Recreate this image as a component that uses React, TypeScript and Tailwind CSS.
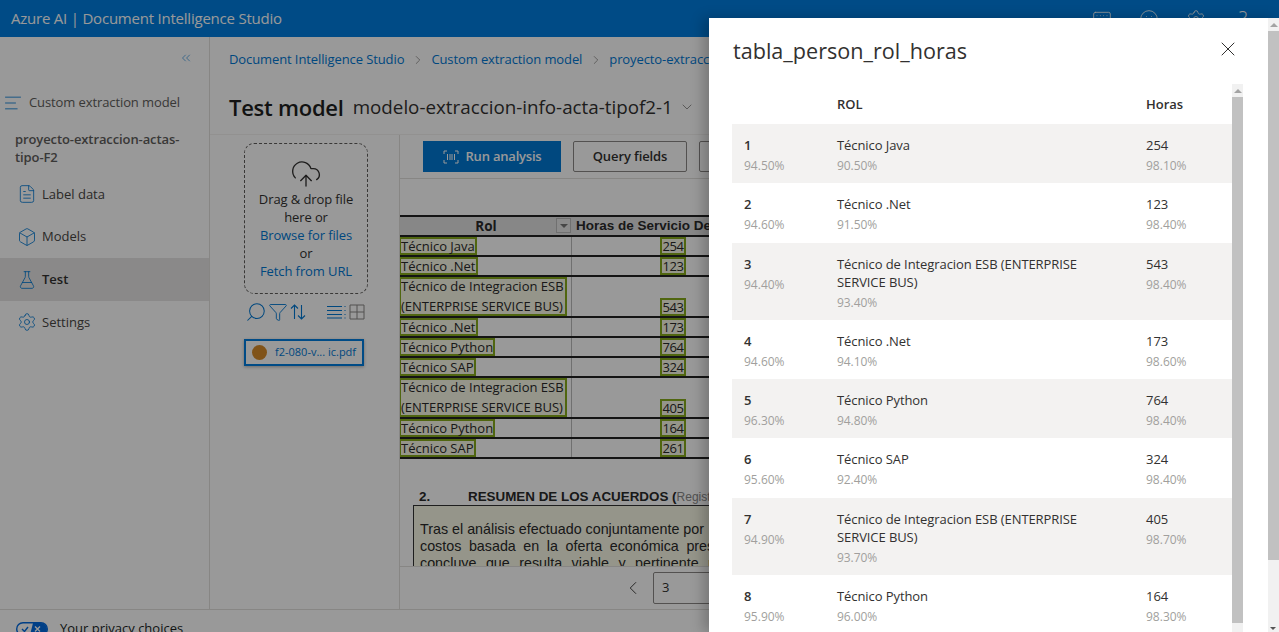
import {
  AlignLeft,
  ChevronDown,
  ChevronLeft,
  ChevronRight,
  ChevronsLeft,
  Box,
  CloudUpload,
  FileText,
  Filter,
  FlaskConical,
  Keyboard,
  Search,
  Settings,
  Smile,
  X,
} from "lucide-react";

const fields = [
  { n: "1", nc: "94.50%", rol: "Técnico Java", rc: "90.50%", h: "254", hc: "98.10%" },
  { n: "2", nc: "94.60%", rol: "Técnico .Net", rc: "91.50%", h: "123", hc: "98.40%" },
  { n: "3", nc: "94.40%", rol: "Técnico de Integracion ESB (ENTERPRISE SERVICE BUS)", rc: "93.40%", h: "543", hc: "98.40%" },
  { n: "4", nc: "94.60%", rol: "Técnico .Net", rc: "94.10%", h: "173", hc: "98.60%" },
  { n: "5", nc: "96.30%", rol: "Técnico Python", rc: "94.80%", h: "764", hc: "98.40%" },
  { n: "6", nc: "95.60%", rol: "Técnico SAP", rc: "92.40%", h: "324", hc: "98.40%" },
  { n: "7", nc: "94.90%", rol: "Técnico de Integracion ESB (ENTERPRISE SERVICE BUS)", rc: "93.70%", h: "405", hc: "98.70%" },
  { n: "8", nc: "95.90%", rol: "Técnico Python", rc: "96.00%", h: "164", hc: "98.30%" },
];

const docRows = [
  { rol: "Técnico Java", h: "254" },
  { rol: "Técnico .Net", h: "123" },
  { rol: "Técnico de Integracion ESB|(ENTERPRISE SERVICE BUS)", h: "543" },
  { rol: "Técnico .Net", h: "173" },
  { rol: "Técnico Python", h: "764" },
  { rol: "Técnico SAP", h: "324" },
  { rol: "Técnico de Integracion ESB|(ENTERPRISE SERVICE BUS)", h: "405" },
  { rol: "Técnico Python", h: "164" },
  { rol: "Técnico SAP", h: "261" },
];

const navItems = [
  { label: "Label data", icon: FileText },
  { label: "Models", icon: Box },
  { label: "Test", icon: FlaskConical, active: true },
  { label: "Settings", icon: Settings },
];

function Scrollbar({ thumb }: { thumb: string }) {
  return (
    <div className="flex h-full w-[11px] shrink-0 flex-col bg-[#f1f1f1]">
      <div className="flex h-[13px] items-center justify-center">
        <div className="h-0 w-0 border-x-[4px] border-b-[4px] border-x-transparent border-b-[#a3a3a3]" />
      </div>
      <div className={`${thumb} w-full bg-[#c1c1c1]`} />
    </div>
  );
}

function DocTable() {
  return (
    <div className="w-[330px] text-[13px] text-[#2a2a2a]">
      <div className="flex h-[22px] border-y-2 border-[#222] bg-[#e2e2e2] font-bold leading-[18px]">
        <div className="relative w-[172px] shrink-0 text-center text-[13.5px]">
          Rol
          <div className="absolute top-[1px] right-[1px] flex h-[15px] w-[15px] items-center justify-center border border-[#bbb] bg-[#e8e8e8]">
            <div className="h-0 w-0 border-x-[4px] border-t-[4px] border-x-transparent border-t-[#777]" />
          </div>
        </div>
        <div className="flex-1 whitespace-nowrap pl-[4px] font-['Liberation_Sans',sans-serif] text-[13.5px]">Horas de Servicio Demandadas</div>
      </div>
      {docRows.map((r, i) => {
        const lines = r.rol.split("|");
        const double = lines.length > 1;
        return (
          <div key={i} className={`flex border-b-2 border-[#222] ${double ? "h-[41px]" : "h-[20px]"}`}>
            <div className="w-[172px] shrink-0 border-r border-[#bbb]">
              <div className={`${double ? "h-[39px] w-[168px]" : "h-[18px] w-fit"} -ml-[1px] border-2 border-[#86aa1c] bg-[#f8f8e6] leading-[14px]`}>
                {lines.map((l, j) => (
                  <div key={j} className={j === 1 ? "mt-[6px] whitespace-nowrap" : "whitespace-nowrap"}>{l}</div>
                ))}
              </div>
            </div>
            <div className="flex w-[114px] items-end justify-end">
              <div className="h-[18px] w-[26px] border-2 border-[#86aa1c] bg-[#f8f8e6] text-center text-[13px] leading-[14px] tracking-[-0.5px]">{r.h}</div>
            </div>
          </div>
        );
      })}
      <div className="mt-[30px] ml-[19px] flex whitespace-nowrap font-['Liberation_Sans',sans-serif] text-[13.4px] font-bold leading-[16px]">
        <span className="w-[49px] shrink-0">2.</span>
        <span>RESUMEN DE LOS ACUERDOS (<span className="font-normal text-[12px] text-[#888]">Registrar</span></span>
      </div>
      <div className="ml-[13px] w-[400px] border border-[#333] bg-[#f8f8e6] px-[6px] pt-[15px] font-['Liberation_Sans',sans-serif] text-[14.3px] leading-[17px] whitespace-nowrap">
        <div>Tras el análisis efectuado conjuntamente por</div>
        <div className="[word-spacing:3.6px]">costos basada en la oferta económica presentada</div>
        <div className="[word-spacing:5.5px]">concluye que resulta viable y pertinente para</div>
      </div>
    </div>
  );
}

function App() {
  return (
    <div className="relative h-[632px] w-[1279px] overflow-hidden bg-white font-['Open_Sans',sans-serif] text-[13px] text-[#323130]">
      <header className="flex h-[37px] items-center justify-between bg-[#007ee0] pl-[11px] text-white">
        <div className="text-[15px] tracking-[-0.22px]">Azure AI | Document Intelligence Studio</div>
        <div className="flex items-center gap-[27px] pr-[26px]">
          <Keyboard size={20} strokeWidth={1} />
          <Smile size={20} strokeWidth={1} />
          <Settings size={20} strokeWidth={1} />
          <span className="w-[20px] text-center text-[20px] font-light leading-none">?</span>
        </div>
      </header>

      <div className="flex h-[572px]">
        <aside className="w-[210px] shrink-0 border-r border-[#e1dfdd]">
          <div className="flex justify-end pt-[14px] pr-[16px] text-[#0078d4]">
            <ChevronsLeft size={14} strokeWidth={1} />
          </div>
          <div className="mt-[28px] flex items-center gap-[6px] pl-[3px] text-[13px] tracking-[-0.1px] text-[#605e5c]">
            <AlignLeft size={20} strokeWidth={1} className="text-[#0078d4]" />
            Custom extraction model
          </div>
          <div className="mt-[17px] px-[15px] text-[13px] font-semibold leading-[18px] tracking-[-0.1px] text-[#605e5c]">
            proyecto-extraccion-actas-tipo-F2
          </div>
          <nav className="mt-[7px]">
            {navItems.map((item) => {
              const Icon = item.icon;
              return (
                <div
                  key={item.label}
                  className={`flex h-[42.7px] items-center gap-[5px] pl-[17px] ${item.active ? "bg-[#e6e5e4] font-semibold" : "text-[#484644]"}`}
                >
                  <Icon size={20} strokeWidth={1} className="text-[#0078d4]" />
                  {item.label}
                </div>
              );
            })}
          </nav>
        </aside>

        <main className="min-w-0 flex-1 pt-[13px]">
          <div className="flex h-[20px] items-center gap-[6.5px] whitespace-nowrap pl-[19px] text-[13px] tracking-[-0.1px] text-[#0078d4]">
            <span>Document Intelligence Studio</span>
            <ChevronRight size={14} strokeWidth={1} className="text-[#605e5c]" />
            <span>Custom extraction model</span>
            <ChevronRight size={14} strokeWidth={1} className="text-[#605e5c]" />
            <span>proyecto-extraccion-actas-tipo-F2</span>
          </div>
          <div className="mt-[19px] flex h-[36px] items-center whitespace-nowrap pl-[19px]">
            <span className="text-[22px] font-semibold tracking-[-0.25px] text-[#201f1e]">Test model</span>
            <span className="ml-[9px] text-[18.8px] text-[#323130]">modelo-extraccion-info-acta-tipof2-1</span>
            <ChevronDown size={16} strokeWidth={1} className="ml-[6px] text-[#605e5c]" />
          </div>

          <div className="mt-[9px] flex h-[475px] border-t border-[#f3f2f1]">
            <div className="w-[190px] shrink-0 border-r border-[#e1dfdd] pl-[34px]">
              <div className="mt-[8px] h-[151px] w-[124px] rounded-[10px] border border-dashed border-[#605e5c] pt-[14px] text-center text-[13px] leading-[18px] tracking-[-0.1px]">
                <CloudUpload size={32} strokeWidth={1} className="mx-auto text-[#323130]" />
                <div>Drag &amp; drop file</div>
                <div>here or</div>
                <div className="text-[#0078d4]">Browse for files</div>
                <div>or</div>
                <div className="text-[#0078d4]">Fetch from URL</div>
              </div>
              <div className="mt-[7px] flex items-center pl-[1px] text-[#0078d4]">
                <Search size={22} strokeWidth={1.1} className="-scale-x-100" />
                <Filter size={20} strokeWidth={1.1} className="ml-[1px]" />
                <svg width="16" height="18" viewBox="0 0 16 18" fill="none" stroke="currentColor" strokeWidth="1.1" className="ml-[2px]">
                  <path d="M4.5 16V2M1 5.5L4.5 2 8 5.5M11.5 2v14M8 12.5l3.5 3.5 3.5-3.5" />
                </svg>
                <svg width="20" height="16" viewBox="0 0 20 16" fill="none" stroke="currentColor" strokeWidth="1.1" className="ml-[21px]">
                  <path d="M0 2.5h15M0 6.5h15M0 10.5h15M0 14h15M17.5 2.5h1M17.5 6.5h1M17.5 10.5h1M17.5 14h1" />
                </svg>
                <svg width="16" height="16" viewBox="0 0 16 16" fill="none" stroke="#8a8886" strokeWidth="1" className="ml-[2px]">
                  <path d="M1 1h14v14H1zM8 1v14M1 8h14" />
                </svg>
              </div>
              <div className="mt-[16px] flex h-[27px] w-[120px] items-center border-[2px] border-[#007ee0] pl-[6px] text-[11px] text-[#0078d4] shadow-[0_1px_3px_rgba(0,0,0,0.3)]">
                <div className="h-[15px] w-[15px] rounded-full bg-[#d68b2a]" />
                <span className="ml-[8px] whitespace-nowrap">f2-080-v... ic.pdf</span>
              </div>
            </div>

            <div className="flex min-w-0 flex-1 flex-col">
              <div className="flex h-[44px] shrink-0 items-start gap-[12px] border-b border-[#e1dfdd] pt-[6px] pl-[23px]">
                <button className="flex h-[31px] w-[138px] items-center justify-center gap-[7px] bg-[#0078d4] font-semibold tracking-[-0.2px] text-white">
                  <svg width="16" height="16" viewBox="0 0 16 16" fill="none" stroke="currentColor" strokeWidth="1">
                    <path d="M1 5V2h3M12 2h3v3M1 11v3h3M12 14h3v-3M4.5 5v6M7 5v6M9 5v6M11.5 5v6" />
                  </svg>
                  Run analysis
                </button>
                <button className="h-[31px] w-[114px] rounded-[2px] border border-[#8a8886] font-semibold tracking-[-0.1px]">Query fields</button>
                <button className="h-[31px] w-[114px] rounded-[2px] border border-[#8a8886]" />
              </div>
              <div className="h-[387px] shrink-0 overflow-hidden pt-[36px]">
                <DocTable />
              </div>
              <div className="flex flex-1 items-start border-t border-[#e1dfdd] pt-[5px]">
                <ChevronLeft size={22} strokeWidth={1} className="mt-[5px] ml-[222px]" />
                <div className="ml-[9px] flex h-[32px] w-[80px] items-center rounded-[2px] border border-[#8a8886] pl-[8px]">3</div>
              </div>
            </div>
          </div>
        </main>
      </div>

      <footer className="flex h-[23px] items-start gap-[12px] border-t border-[#e1dfdd] pt-[12px] pl-[16px] text-[13px] text-[#201f1e]">
        <svg width="32" height="14" viewBox="0 0 32 14" className="shrink-0">
          <rect x="0.7" y="0.7" width="30.6" height="12.6" rx="6.3" fill="#fff" stroke="#0069e0" strokeWidth="1.4" />
          <path d="M17 1h8a6 6 0 0 1 0 12h-11z" fill="#0069e0" />
          <path d="M6 7l2.5 2.5L12 5" fill="none" stroke="#0069e0" strokeWidth="1.4" />
          <path d="M19 4.5l5 5M24 4.5l-5 5" stroke="#fff" strokeWidth="1.4" />
        </svg>
        <span className="-mt-[2px] leading-[16px]">Your privacy choices</span>
      </footer>

      <div className="absolute inset-0 bg-black/40" />

      {/* Fields panel */}
      <div className="absolute top-[18px] right-0 bottom-0 left-[709px] flex bg-white shadow-[-6px_0_12px_rgba(0,0,0,0.22)]">
        <div className="min-w-0 flex-1 pl-[23px]">
          <div className="flex h-[66px] items-center justify-between pr-[28px] pl-[1px]">
            <div className="text-[21.6px] text-[#323130]">tabla_person_rol_horas</div>
            <X size={24} strokeWidth={1} className="mb-[4px] text-[#323130]" />
          </div>
          <div className="flex h-[548px]">
            <div className="w-[500px] shrink-0 overflow-hidden">
              <div className="grid h-[40px] grid-cols-[93px_309px_1fr] items-center pl-[12px] pt-[1px] font-semibold">
                <div />
                <div>ROL</div>
                <div>Horas</div>
              </div>
              {fields.map((f, i) => (
                <div
                  key={f.n}
                  className={`grid grid-cols-[93px_309px_1fr] pt-[12px] pb-[8.3px] pl-[12px] leading-[18px] ${i % 2 === 0 ? "bg-[#f3f2f1]" : "bg-white"}`}
                >
                  <div>
                    <div className="font-semibold">{f.n}</div>
                    <div className="mt-[3px] text-[12px] text-[#a19f9d]">{f.nc}</div>
                  </div>
                  <div className="pr-[20px] tracking-[-0.08px]">
                    <div>{f.rol}</div>
                    <div className="mt-[3px] text-[12px] text-[#a19f9d]">{f.rc}</div>
                  </div>
                  <div>
                    <div>{f.h}</div>
                    <div className="mt-[3px] text-[12px] text-[#a19f9d]">{f.hc}</div>
                  </div>
                </div>
              ))}
            </div>
            <Scrollbar thumb="h-[526px]" />
          </div>
        </div>
        <div className="relative h-full">
          <Scrollbar thumb="h-[529px]" />
          <div className="absolute right-[3px] bottom-[2px] h-0 w-0 border-x-[3px] border-t-[3px] border-x-transparent border-t-[#555]" />
        </div>
      </div>
    </div>
  );
}

export default App;
